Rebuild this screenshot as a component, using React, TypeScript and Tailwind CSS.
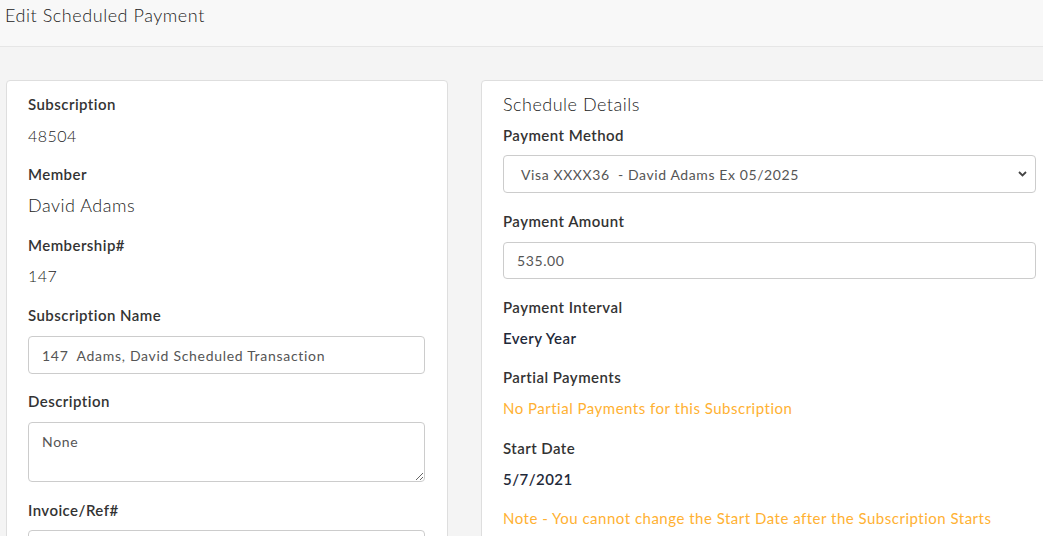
import React from "react";

const font = { fontFamily: "Lato, 'Open Sans', sans-serif" };

const Label: React.FC<{ children: React.ReactNode }> = ({ children }) => (
  <div className="text-[15px] font-semibold text-[#333] leading-5 tracking-[0.45px]">{children}</div>
);

const App: React.FC = () => {
  return (
    <div className="w-[1043px] h-[536px] overflow-hidden bg-[#f4f4f4] font-['Lato','Open_Sans',sans-serif]" style={font}>
      <div className="h-[47px] bg-[#f8f8f8] border-b border-[#e6e6e6] px-[5px] pt-[3px]">
        <h1 className="text-[18px] font-light text-[#222] leading-6 tracking-[0.55px]">Edit Scheduled Payment</h1>
      </div>

      <div className="flex gap-[33px] pl-[6px] pt-[33px]">
        {/* left card */}
        <section className="w-[442px] shrink-0 bg-white border border-[#dedede] rounded-[4px] px-[21px] pt-[13px] h-[600px]">
          <Label>Subscription</Label>
          <div className="mt-[12px] text-[16px] font-light text-[#222] leading-5 tracking-[0.5px]">48504</div>

          <div className="mt-[18px]"><Label>Member</Label></div>
          <div className="mt-[11px] text-[18px] font-light text-[#222] leading-5 tracking-[0.5px]">David Adams</div>

          <div className="mt-[20px]"><Label>Membership#</Label></div>
          <div className="mt-[11px] text-[16px] font-light text-[#222] leading-5 tracking-[0.5px]">147</div>

          <div className="mt-[19px]"><Label>Subscription Name</Label></div>
          <input
            readOnly
            value="147  Adams, David Scheduled Transaction"
            className="mt-[11px] w-[397px] h-[38px] border border-[#ccc] rounded-[4px] px-[13px] text-[14px] text-[#555] tracking-[0.7px] outline-none"
          />

          <div className="mt-[17px]"><Label>Description</Label></div>
          <textarea
            readOnly
            value="None"
            className="mt-[11px] block w-[397px] h-[60px] border border-[#ccc] rounded-[4px] px-[13px] pt-[8px] text-[14px] text-[#555] tracking-[0.7px] outline-none resize-y"
          />

          <div className="mt-[18px]"><Label>Invoice/Ref#</Label></div>
          <input readOnly className="mt-[10px] w-[397px] h-[38px] border border-[#ccc] rounded-[4px]" />
        </section>

        {/* right card */}
        <section className="w-[577px] shrink-0 bg-white border border-[#dedede] rounded-[4px] px-[21px] pt-[11px] h-[600px]">
          <h2 className="text-[18px] font-light text-[#222] leading-6 tracking-[0.5px]">Schedule Details</h2>
          <div className="mt-[9px]"><Label>Payment Method</Label></div>
          <div className="mt-[10px] relative w-[533px] h-[38px] border border-[#ccc] rounded-[4px] flex items-center pl-[17px] text-[14px] text-[#555] tracking-[0.6px]">
            Visa XXXX36&nbsp; - David Adams Ex 05/2025
            <svg className="absolute right-[8px] top-[15px]" width="9" height="6" viewBox="0 0 9 6">
              <path d="M1 1l3.5 3.5L8 1" stroke="#444" strokeWidth="1.8" fill="none" />
            </svg>
          </div>

          <div className="mt-[18px]"><Label>Payment Amount</Label></div>
          <input
            readOnly
            value="535.00"
            className="mt-[11px] w-[533px] h-[37px] border border-[#ccc] rounded-[4px] px-[13px] text-[14px] text-[#555] tracking-[0.6px] outline-none"
          />

          <div className="mt-[18px]"><Label>Payment Interval</Label></div>
          <div className="mt-[11px] text-[15px] font-semibold text-[#1f2a3a] leading-5 tracking-[0.45px]">Every Year</div>

          <div className="mt-[19px]"><Label>Partial Payments</Label></div>
          <div className="mt-[11px] text-[15px] text-[#ffb132] leading-5 tracking-[0.5px]">No Partial Payments for this Subscription</div>

          <div className="mt-[20px]"><Label>Start Date</Label></div>
          <div className="mt-[11px] text-[15px] font-semibold text-[#1f2a3a] leading-5 tracking-[0.45px]">5/7/2021</div>

          <div className="mt-[19px] text-[15px] text-[#ffb132] leading-5 tracking-[0.5px]">Note - You cannot change the Start Date after the Subscription Starts</div>
        </section>
      </div>
    </div>
  );
};

export default App;
